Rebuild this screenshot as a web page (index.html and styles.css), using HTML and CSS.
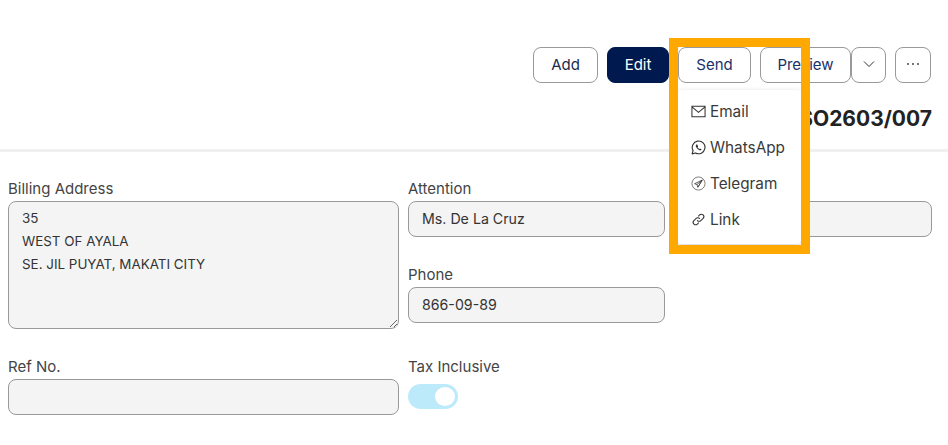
FILE: index.html
```html
<!DOCTYPE html>
<html lang="en">
<head>
  <meta charset="UTF-8">
  <title>Sales Order SO2603/007</title>
  <link rel="stylesheet" href="styles.css">
</head>
<body>

  <div class="toolbar">
    <button class="btn btn-add">Add</button>
    <button class="btn btn-edit">Edit</button>
    <div class="send-wrap">
      <button class="btn btn-send">Send</button>
      <div class="send-menu">
        <a class="menu-item">
          <svg viewBox="0 0 16 16" class="menu-icon"><path d="M1 2.500h14v11h-14z M1 3 8 9l7-6" fill="none" stroke="#333" stroke-width="1.100"/></svg>
          Email
        </a>
        <a class="menu-item">
          <svg viewBox="0 0 16 16" class="menu-icon"><path d="M1.200 14.800l1-3.600A6.800 6.800 0 1 1 4.800 13.800z" fill="none" stroke="#333" stroke-width="1.200" stroke-linejoin="round"/><path d="M5.700 4.800c-.8.700-.8 1.900 0 3.100.8 1.300 1.800 2.300 3.200 2.900 1 .4 2 .1 2.400-.8l-1.700-1-.7.6c-.8-.4-1.500-1.100-1.900-1.900l.6-.7-.9-2.200z" fill="#333"/></svg>
          WhatsApp
        </a>
        <a class="menu-item">
          <svg viewBox="0 0 16 16" class="menu-icon"><circle cx="8" cy="8" r="7" fill="none" stroke="#555" stroke-width=".8"/><path d="M12 4.300 3.800 8.200l2.600.9L7.300 12z M6.400 9.100 12 4.300 7.300 12" fill="none" stroke="#444" stroke-width=".9" stroke-linejoin="round"/></svg>
          Telegram
        </a>
        <a class="menu-item">
          <svg viewBox="0 0 16 16" class="menu-icon"><path d="M6.800 9.200a2.600 2.600 0 0 0 3.700 0l2.400-2.400a2.600 2.600 0 0 0-3.700-3.700L8 4.300 M9.200 6.800a2.600 2.600 0 0 0-3.700 0L3.100 9.200a2.600 2.600 0 0 0 3.700 3.700L8 11.700" fill="none" stroke="#333" stroke-width="1.100" stroke-linecap="round"/></svg>
          Link
        </a>
      </div>
    </div>
    <div class="split">
      <button class="btn btn-preview">Preview</button>
      <button class="btn btn-icon">
        <svg viewBox="0 0 12 12" width="12" height="12"><path d="M1 3.500l5 5 5-5" fill="none" stroke="#333" stroke-width="1"/></svg>
      </button>
    </div>
    <button class="btn btn-icon btn-more">
      <svg viewBox="0 0 14 12" width="14" height="12"><circle cx="2" cy="6" r=".9" fill="#333"/><circle cx="7" cy="6" r=".9" fill="#333"/><circle cx="12" cy="6" r=".9" fill="#333"/></svg>
    </button>
  </div>

  <div class="doc-no">SO2603/007</div>

  <div class="form-grid">
    <div class="field billing">
      <label>Billing Address</label>
      <textarea readonly>35
WEST OF AYALA
SE. JIL PUYAT, MAKATI CITY</textarea>
    </div>
    <div class="field">
      <label>Attention</label>
      <input type="text" value="Ms. De La Cruz" readonly>
    </div>
    <div class="field">
      <label>&nbsp;</label>
      <input type="text" readonly>
    </div>
    <div class="field phone">
      <label>Phone</label>
      <input type="text" value="866-09-89" readonly>
    </div>
    <div class="field ref-no">
      <label>Ref No.</label>
      <input type="text" readonly>
    </div>
    <div class="field">
      <label>Tax Inclusive</label>
      <div class="toggle"><span class="knob"></span></div>
    </div>
  </div>

  <div class="highlight"></div>

</body>
</html>
```

FILE: styles.css
```css
* {
  box-sizing: border-box;
}

body {
  margin: 0;
  font-family: 'Inter', 'Open Sans', sans-serif;
  font-size: 14px;
  color: #333;
  background: #fff;
  overflow: hidden;
}

.toolbar {
  display: flex;
  justify-content: flex-end;
  gap: 9px;
  padding: 47px 17px 0 0;
}

.btn {
  height: 36px;
  padding: 0 0 2px;
  border: 1px solid #999;
  border-radius: 8px;
  background: #fff;
  color: #1d2b4f;
  font-family: inherit;
  font-size: 15px;
}

.btn-add {
  width: 65px;
}

.btn-edit {
  width: 62px;
  background: #001a4f;
  border-color: #001a4f;
  color: #fff;
}

.btn-send {
  width: 73px;
  color: #17326b;
}

.btn-preview {
  width: 91px;
  color: #17326b;
}

.btn-icon {
  width: 36px;
  display: flex;
  align-items: center;
  justify-content: center;
}

.split {
  display: flex;
}

.split .btn-icon {
  width: 35px;
}

.send-wrap {
  position: relative;
}

.send-menu {
  position: absolute;
  top: 43px;
  left: 0;
  width: 123px;
  height: 154px;
  padding: 3px 0;
  background: #fff;
  border-radius: 4px;
  box-shadow: 0 2px 6px rgba(0, 0, 0, 0.18);
  z-index: 5;
}

.menu-item {
  display: flex;
  align-items: center;
  gap: 4px;
  height: 36px;
  padding-left: 13px;
  font-size: 15.300px;
  color: #3a3a3a;
}

.menu-icon {
  width: 15px;
  height: 15px;
  flex: none;
}

.doc-no {
  margin-top: 22px;
  padding-right: 16px;
  text-align: right;
  font-size: 21px;
  line-height: 28px;
  font-weight: 700;
  color: #222;
}

.form-grid {
  display: grid;
  grid-template-columns: 391px 257px 258px;
  grid-template-rows: 86px 92px 60px;
  column-gap: 9px;
  margin-top: 16px;
  padding: 28px 0 0 8px;
  border-top: 3px solid #f0f0f0;
}

.billing {
  grid-row: span 2;
}

.phone {
  grid-column: 2;
}

.ref-no {
  grid-column: 1;
}

label {
  display: block;
  height: 21px;
  line-height: 17px;
  font-size: 15px;
  color: #444;
}

input,
textarea {
  display: block;
  width: 100%;
  background: #f4f4f4;
  border: 1px solid #999;
  border-radius: 8px;
  font-family: inherit;
  font-size: 14.200px;
  color: #333;
  outline: none;
}

input {
  height: 36px;
  padding: 0 13px 2px;
}

textarea {
  height: 128px;
  padding: 5px 13px;
  font-size: 13.400px;
  line-height: 23px;
}

.toggle {
  width: 50px;
  height: 25px;
  margin-top: 5px;
  padding: 3px;
  display: flex;
  justify-content: flex-end;
  background: #bdeafb;
  border-radius: 13px;
}

.knob {
  width: 20px;
  height: 19px;
  background: #fff;
  border-radius: 50%;
}

.highlight {
  position: absolute;
  top: 38px;
  left: 669px;
  width: 141px;
  height: 216px;
  border: 9px solid #ffa800;
  z-index: 10;
}
```
